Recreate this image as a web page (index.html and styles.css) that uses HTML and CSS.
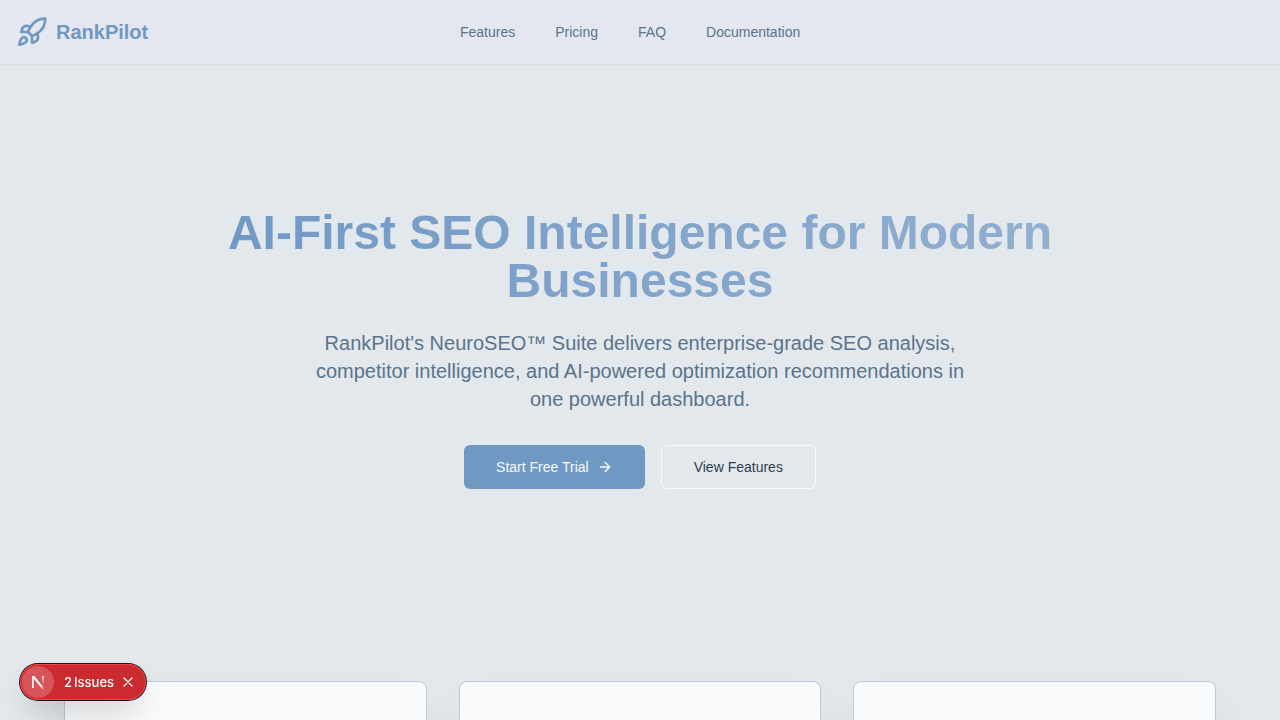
FILE: index.html
```html
<!DOCTYPE html>
<html lang="en">
<head>
<meta charset="utf-8">
<meta name="viewport" content="width=device-width, initial-scale=1">
<title>RankPilot</title>
<link rel="stylesheet" href="styles.css">
</head>
<body>
<div class="page">
  <header class="header">
    <a class="brand" href="#">
      <svg class="brand-icon" viewBox="0 0 24 24" aria-hidden="true">
        <path d="M4.5 16.5c-1.5 1.26-2 5-2 5s3.74-.5 5-2c.71-.84.7-2.13-.09-2.91a2.18 2.18 0 0 0-2.91-.09z"/>
        <path d="m12 15-3-3a22 22 0 0 1 2-3.95A12.88 12.88 0 0 1 22 2c0 2.72-.78 7.5-6 11a22.35 22.35 0 0 1-4 2z"/>
        <path d="M9 12H4s.55-3.03 2-4c1.62-1.08 5 0 5 0"/>
        <path d="M12 15v5s3.03-.55 4-2c1.08-1.62 0-5 0-5"/>
      </svg>
      <span>RankPilot</span>
    </a>
    <nav class="nav">
      <a href="#features">Features</a>
      <a href="#pricing">Pricing</a>
      <a href="#faq">FAQ</a>
      <a href="#docs">Documentation</a>
    </nav>
    <div class="header-end"></div>
  </header>
  <main>
    <section class="hero">
      <h1 class="title">AI-First SEO Intelligence for Modern Businesses</h1>
      <p class="lead">RankPilot's NeuroSEO™ Suite delivers enterprise-grade SEO analysis, competitor intelligence, and AI-powered optimization recommendations in one powerful dashboard.</p>
      <div class="actions">
        <button class="button button-primary" type="button">Start Free Trial
          <svg class="arrow" viewBox="0 0 24 24" aria-hidden="true"><path d="M5 12h14"/><path d="m12 5 7 7-7 7"/></svg>
        </button>
        <button class="button button-outline" type="button">View Features</button>
      </div>
    </section>
    <section class="cards" id="features">
      <div class="card"></div>
      <div class="card"></div>
      <div class="card"></div>
    </section>
  </main>
</div>
<div class="issues">
  <button class="issues-logo" type="button" aria-label="Open tools">
    <svg viewBox="0 0 40 40" aria-hidden="true">
      <defs>
        <linearGradient id="fade-diagonal" x1="21" y1="21" x2="28" y2="30" gradientUnits="userSpaceOnUse"><stop offset="0.3" stop-color="#fff"/><stop offset="1" stop-color="#fff" stop-opacity="0"/></linearGradient>
        <linearGradient id="fade-stem" x1="26" y1="12" x2="26" y2="24" gradientUnits="userSpaceOnUse"><stop offset="0" stop-color="#fff"/><stop offset="1" stop-color="#fff" stop-opacity="0"/></linearGradient>
      </defs>
      <path class="n-left" d="M13.6 27.5V13.3"/>
      <path d="M12.6 12.6h3l12.2 15.6-1.8 1.5L12.6 13.4z" fill="url(#fade-diagonal)"/>
      <path d="M25.2 12.6h2v11h-2z" fill="url(#fade-stem)"/>
    </svg>
  </button>
  <button class="issues-label" type="button"><span>2</span><span>Issues</span></button>
  <button class="issues-close" type="button" aria-label="Dismiss">
    <svg viewBox="0 0 12 12" aria-hidden="true"><path d="M2 2l8 8M10 2l-8 8"/></svg>
  </button>
</div>
</body>
</html>
```

FILE: styles.css
```css
* {
  box-sizing: border-box;
}

body {
  margin: 0;
  background: #e2e8eb;
  color: #334155;
  font-family: "Liberation Sans", Arial, sans-serif;
}

a {
  color: inherit;
  text-decoration: none;
}

button {
  margin: 0;
  border: 0;
  padding: 0;
  background: none;
  color: inherit;
  font: inherit;
  cursor: pointer;
}

.page {
  height: 100vh;
  overflow: hidden;
}

.header {
  display: flex;
  align-items: center;
  justify-content: space-between;
  height: 65px;
  padding: 0 16px;
  border-bottom: 1px solid #dce1e6;
  background: #e4e7ef;
}

.brand {
  display: flex;
  align-items: center;
  gap: 8px;
  color: #6f98c2;
  font-size: 20px;
  font-weight: 700;
  line-height: 28px;
}

.brand-icon {
  width: 32px;
  height: 32px;
  fill: none;
  stroke: currentColor;
  stroke-width: 2;
  stroke-linecap: round;
  stroke-linejoin: round;
}

.nav {
  display: flex;
  gap: 40px;
  color: #5b738b;
  font-size: 14px;
  line-height: 20px;
}

.header-end {
  width: 152px;
}

.hero {
  display: flex;
  flex-direction: column;
  align-items: center;
  padding: 144px 16px;
  text-align: center;
}

.title {
  max-width: 896px;
  margin: 0 0 24px;
  background: linear-gradient(to right, #6f98c5, #93b0d0);
  background-clip: text;
  -webkit-background-clip: text;
  color: transparent;
  font-size: 48px;
  font-weight: 700;
  line-height: 48px;
}

.lead {
  max-width: 672px;
  margin: 0 0 32px;
  color: #5b738b;
  font-size: 20px;
  line-height: 28px;
}

.actions {
  display: flex;
  gap: 16px;
}

.button {
  display: flex;
  align-items: center;
  gap: 8px;
  height: 44px;
  padding: 0 32px;
  border-radius: 6px;
  font-size: 14px;
  line-height: 20px;
}

.button-primary {
  background: #6f98c2;
  color: #f8fafc;
}

.button-outline {
  border: 1px solid #f8fafc;
  color: #2f3f51;
}

.arrow {
  width: 16px;
  height: 16px;
  fill: none;
  stroke: currentColor;
  stroke-width: 2;
  stroke-linecap: round;
  stroke-linejoin: round;
}

.cards {
  display: grid;
  grid-template-columns: repeat(3, 1fr);
  gap: 32px;
  padding: 48px 64px;
}

.card {
  min-height: 240px;
  border: 1px solid #bdc9d5;
  border-radius: 8px;
  background: #f9fafc;
  box-shadow: 0 25px 50px -12px rgba(0, 0, 0, 0.12);
}

.issues {
  position: fixed;
  left: 20px;
  bottom: 20px;
  display: flex;
  align-items: center;
  height: 36px;
  padding: 2px;
  border-radius: 18px;
  background: #ca2a30;
  color: #fff;
  box-shadow: 0 0 0 1px #171717, inset 0 0 0 1px #e5484d, 0 16px 32px -8px rgba(0, 0, 0, 0.24);
}

.issues-logo {
  width: 32px;
  height: 32px;
  border-radius: 50%;
  background: #d7545a;
}

.issues-logo svg {
  display: block;
  width: 32px;
  height: 32px;
}

.n-left {
  fill: none;
  stroke: #fff;
  stroke-width: 2;
}

.issues-label {
  display: flex;
  gap: 2px;
  padding: 0 8px 0 10px;
  font-family: Inter, sans-serif;
  font-size: 13px;
  font-weight: 500;
  line-height: 20px;
}

.issues-close {
  display: grid;
  place-items: center;
  width: 12px;
  height: 24px;
  margin-right: 10px;
}

.issues-close svg {
  width: 12px;
  height: 12px;
  fill: none;
  stroke: currentColor;
  stroke-width: 1.25;
  stroke-linecap: round;
}
```
